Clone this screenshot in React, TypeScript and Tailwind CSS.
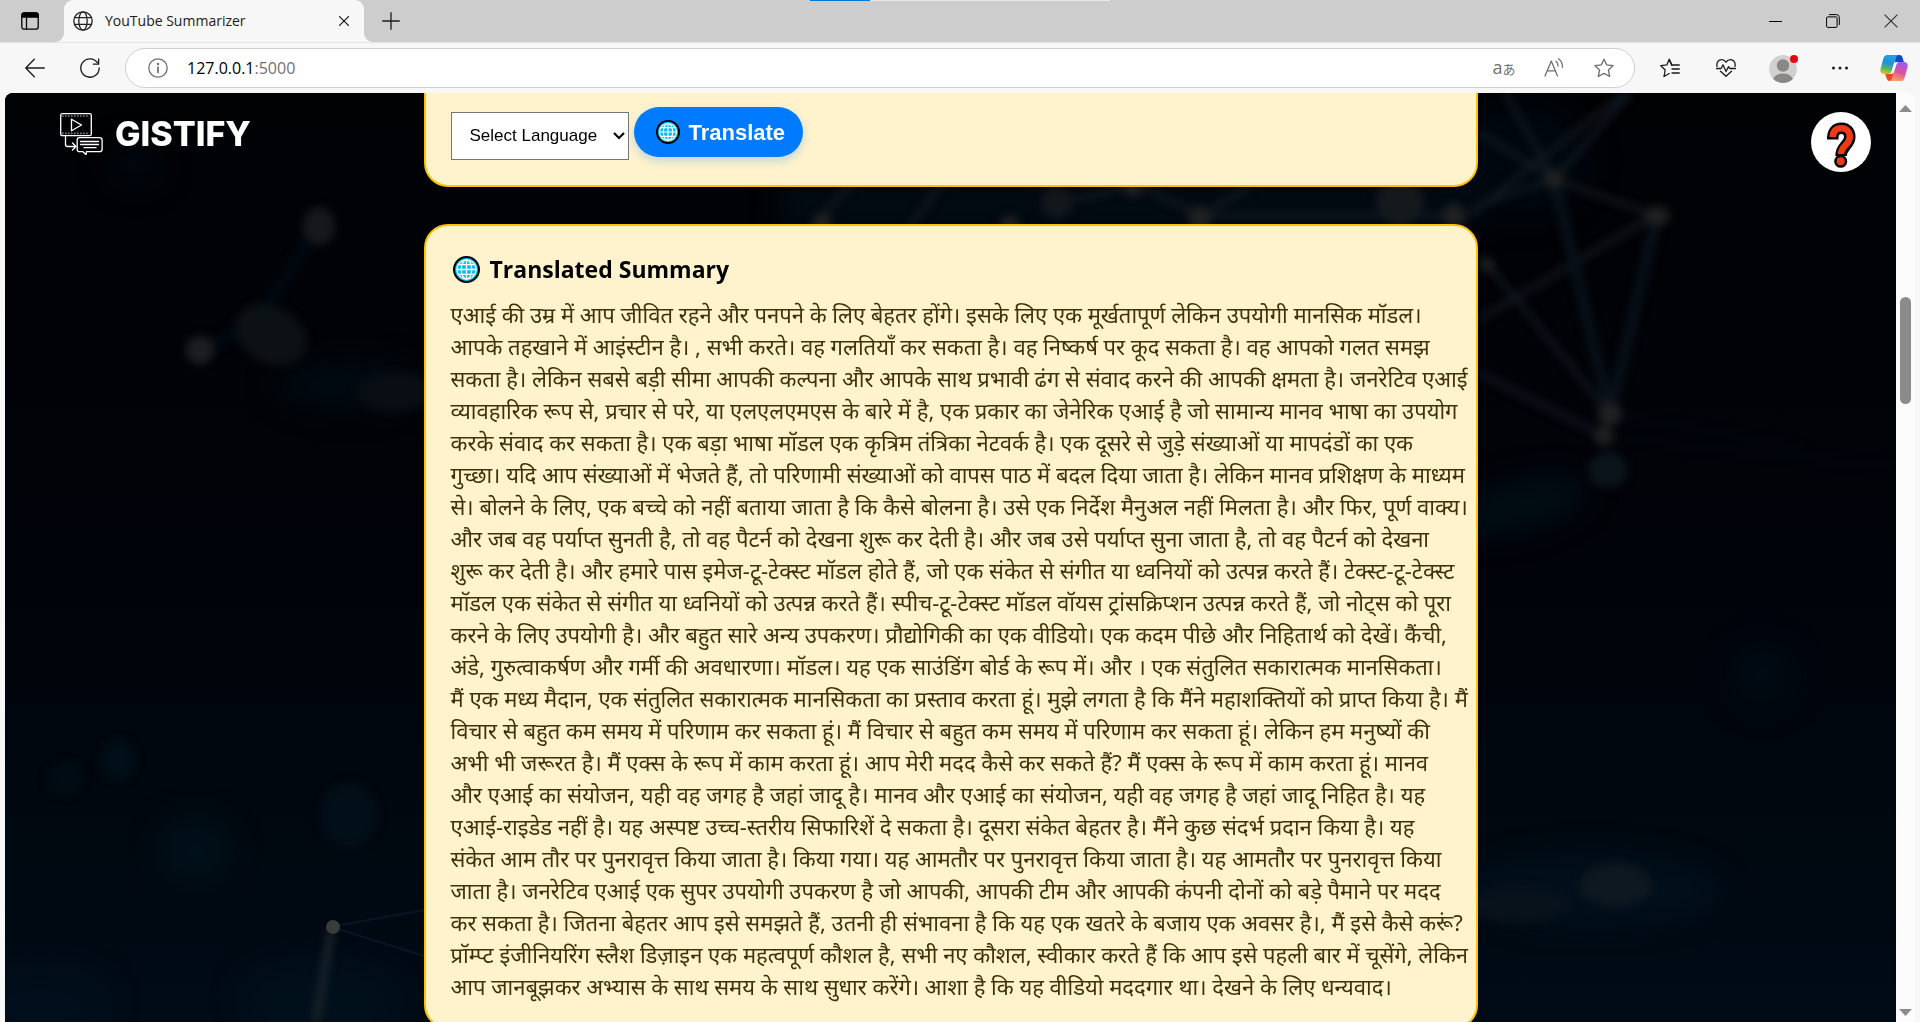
import React from "react";

const SUMMARY_LINES = [
  "एआई की उम्र में आप जीवित रहने और पनपने के लिए बेहतर होंगे। इसके लिए एक मूर्खतापूर्ण लेकिन उपयोगी मानसिक मॉडल।",
  "आपके तहखाने में आइंस्टीन है। , सभी करते। वह गलतियाँ कर सकता है। वह निष्कर्ष पर कूद सकता है। वह आपको गलत समझ",
  "सकता है। लेकिन सबसे बड़ी सीमा आपकी कल्पना और आपके साथ प्रभावी ढंग से संवाद करने की आपकी क्षमता है। जनरेटिव एआई",
  "व्यावहारिक रूप से, प्रचार से परे, या एलएलएमएस के बारे में है, एक प्रकार का जेनेरिक एआई है जो सामान्य मानव भाषा का उपयोग",
  "करके संवाद कर सकता है। एक बड़ा भाषा मॉडल एक कृत्रिम तंत्रिका नेटवर्क है। एक दूसरे से जुड़े संख्याओं या मापदंडों का एक",
  "गुच्छा। यदि आप संख्याओं में भेजते हैं, तो परिणामी संख्याओं को वापस पाठ में बदल दिया जाता है। लेकिन मानव प्रशिक्षण के माध्यम",
  "से। बोलने के लिए, एक बच्चे को नहीं बताया जाता है कि कैसे बोलना है। उसे एक निर्देश मैनुअल नहीं मिलता है। और फिर, पूर्ण वाक्य।",
  "और जब वह पर्याप्त सुनती है, तो वह पैटर्न को देखना शुरू कर देती है। और जब उसे पर्याप्त सुना जाता है, तो वह पैटर्न को देखना",
  "शुरू कर देती है। और हमारे पास इमेज-टू-टेक्स्ट मॉडल होते हैं, जो एक संकेत से संगीत या ध्वनियों को उत्पन्न करते हैं। टेक्स्ट-टू-टेक्स्ट",
  "मॉडल एक संकेत से संगीत या ध्वनियों को उत्पन्न करते हैं। स्पीच-टू-टेक्स्ट मॉडल वॉयस ट्रांसक्रिप्शन उत्पन्न करते हैं, जो नोट्स को पूरा",
  "करने के लिए उपयोगी है। और बहुत सारे अन्य उपकरण। प्रौद्योगिकी का एक वीडियो। एक कदम पीछे और निहितार्थ को देखें। कैंची,",
  "अंडे, गुरुत्वाकर्षण और गर्मी की अवधारणा। मॉडल। यह एक साउंडिंग बोर्ड के रूप में। और । एक संतुलित सकारात्मक मानसिकता।",
  "मैं एक मध्य मैदान, एक संतुलित सकारात्मक मानसिकता का प्रस्ताव करता हूं। मुझे लगता है कि मैंने महाशक्तियों को प्राप्त किया है। मैं",
  "विचार से बहुत कम समय में परिणाम कर सकता हूं। मैं विचार से बहुत कम समय में परिणाम कर सकता हूं। लेकिन हम मनुष्यों की",
  "अभी भी जरूरत है। मैं एक्स के रूप में काम करता हूं। आप मेरी मदद कैसे कर सकते हैं? मैं एक्स के रूप में काम करता हूं। मानव",
  "और एआई का संयोजन, यही वह जगह है जहां जादू है। मानव और एआई का संयोजन, यही वह जगह है जहां जादू निहित है। यह",
  "एआई-राइडेड नहीं है। यह अस्पष्ट उच्च-स्तरीय सिफारिशें दे सकता है। दूसरा संकेत बेहतर है। मैंने कुछ संदर्भ प्रदान किया है। यह",
  "संकेत आम तौर पर पुनरावृत्त किया जाता है। किया गया। यह आमतौर पर पुनरावृत्त किया जाता है। यह आमतौर पर पुनरावृत्त किया",
  "जाता है। जनरेटिव एआई एक सुपर उपयोगी उपकरण है जो आपकी, आपकी टीम और आपकी कंपनी दोनों को बड़े पैमाने पर मदद",
  "कर सकता है। जितना बेहतर आप इसे समझते हैं, उतनी ही संभावना है कि यह एक खतरे के बजाय एक अवसर है।, मैं इसे कैसे करूं?",
  "प्रॉम्प्ट इंजीनियरिंग स्लैश डिज़ाइन एक महत्वपूर्ण कौशल है, सभी नए कौशल, स्वीकार करते हैं कि आप इसे पहली बार में चूसेंगे, लेकिन",
  "आप जानबूझकर अभ्यास के साथ समय के साथ सुधार करेंगे। आशा है कि यह वीडियो मददगार था। देखने के लिए धन्यवाद।",
];

type IconProps = { className?: string; children: React.ReactNode; box?: string };

function Icon({ className = "size-5", children, box = "0 0 20 20" }: IconProps) {
  return (
    <svg
      viewBox={box}
      className={className}
      fill="none"
      stroke="currentColor"
      strokeWidth="1.3"
      strokeLinecap="round"
      strokeLinejoin="round"
      aria-hidden="true"
    >
      {children}
    </svg>
  );
}

function ToolButton({ label, className = "w-10", children }: { label: string; className?: string; children: React.ReactNode }) {
  return (
    <button type="button" aria-label={label} className={`flex h-10 shrink-0 items-center justify-center ${className}`}>
      {children}
    </button>
  );
}

function GlobeEmoji({ className }: { className: string }) {
  return (
    <svg viewBox="0 0 26 26" className={className} fill="none" aria-hidden="true">
      <circle cx="13" cy="13" r="12" fill="#00bcf2" stroke="#000" strokeWidth="2" />
      <g stroke="#fff" strokeWidth="1.3">
        <circle cx="13" cy="13" r="9.2" />
        <ellipse cx="13" cy="13" rx="5" ry="9.2" />
        <path d="M13 3.8v18.4M3.8 13h18.4M5.5 8.3h15M5.5 17.7h15" />
      </g>
    </svg>
  );
}

function TabStrip() {
  return (
    <header className="relative flex h-[42px] shrink-0 items-stretch bg-[#cdcdcd]">
      <div className="absolute top-0 left-1/2 h-px w-[300px] -translate-x-1/2 bg-[#e6e6e6]">
        <div className="h-px w-[60px] bg-[#0078d7]" />
      </div>
      <button type="button" aria-label="Tab actions" className="flex w-[64px] items-center justify-center pr-1">
        <svg viewBox="0 0 18 18" className="size-[18px]" fill="none" stroke="#000" strokeWidth="1.3" aria-hidden="true">
          <rect x="0.8" y="0.8" width="16.4" height="16.4" rx="2.5" />
          <path d="M1 3a2 2 0 0 1 2-2h12a2 2 0 0 1 2 2v2H1z" fill="#000" />
          <path d="M5.5 5v12" />
        </svg>
      </button>
      <div className="relative flex w-[300px] items-center rounded-t-[9px] bg-[#f7f7f7] pr-3 pl-[9px]">
        <svg viewBox="0 0 9 9" className="absolute bottom-0 -left-[9px] size-[9px]" fill="#f7f7f7" aria-hidden="true">
          <path d="M9 0v9H0a9 9 0 0 0 9-9z" />
        </svg>
        <svg viewBox="0 0 9 9" className="absolute -right-[9px] bottom-0 size-[9px]" fill="#f7f7f7" aria-hidden="true">
          <path d="M0 0v9h9a9 9 0 0 1-9-9z" />
        </svg>
        <Icon className="size-5 shrink-0 text-[#222]">
          <circle cx="10" cy="10" r="9.2" />
          <ellipse cx="10" cy="10" rx="4.2" ry="9.2" />
          <path d="M2 6.6h16M2 13.4h16" />
        </Icon>
        <span className="ml-3 flex-1 truncate text-[14px] leading-5 text-[#1b1b1b]">YouTube Summarizer</span>
        <button type="button" aria-label="Close tab" className="flex size-4 items-center justify-center text-[#1b1b1b]">
          <Icon className="size-[10px]" box="0 0 10 10">
            <path d="M.6.6l8.8 8.8M9.4.6L.6 9.4" />
          </Icon>
        </button>
      </div>
      <button type="button" aria-label="New tab" className="flex w-[54px] items-center justify-center text-[#1b1b1b]">
        <Icon className="size-[18px]" box="0 0 18 18">
          <path d="M9 .7v16.6M.7 9h16.6" />
        </Icon>
      </button>
      <div className="ml-auto flex text-black">
        <button type="button" aria-label="Minimize" className="flex w-[58px] items-center justify-center">
          <span className="h-px w-[13px] bg-black" />
        </button>
        <button type="button" aria-label="Restore" className="flex w-[58px] items-center justify-center">
          <svg viewBox="0 0 14 14" className="size-[14px]" fill="none" stroke="currentColor" aria-hidden="true">
            <rect x="0.6" y="2.9" width="10.5" height="10.5" rx="1" />
            <path d="M3 .6h7.5a2.8 2.8 0 0 1 2.8 2.8V11" />
          </svg>
        </button>
        <button type="button" aria-label="Close window" className="flex w-[58px] items-center justify-center text-[#333]">
          <svg viewBox="0 0 14 14" className="size-[14px]" fill="none" stroke="currentColor" strokeWidth="1.2" aria-hidden="true">
            <path d="M.6.6l12.8 12.8M13.4.6L.6 13.4" />
          </svg>
        </button>
      </div>
    </header>
  );
}

function Toolbar() {
  return (
    <nav aria-label="Browser toolbar" className="flex h-[50px] shrink-0 items-center border-t border-[#e4e4e4] bg-[#f7f7f7] pl-[15px] text-[#1b1b1b]">
      <ToolButton label="Back">
        <Icon>
          <path d="M19.3 10H1M9.3 1.2L.8 10l8.5 8.8" />
        </Icon>
      </ToolButton>
      <ToolButton label="Refresh" className="ml-[15px] w-10">
        <Icon>
          <path d="M17.6 4.8A9.2 9.2 0 1 0 19.2 10" />
          <path d="M18.6 1v5.2h-5.2" />
        </Icon>
      </ToolButton>
      <div className="ml-[15px] flex h-10 flex-1 items-center rounded-full border border-[#cfcfcf] bg-white pr-[5px] pl-[22px] text-[#6f6f6f]">
        <Icon className="size-5 shrink-0">
          <circle cx="10" cy="10" r="9.2" />
          <path d="M10 9v5.4" strokeWidth="1.7" />
          <circle cx="10" cy="6" r="0.6" fill="currentColor" />
        </Icon>
        <div aria-label="Address" className="ml-[19px] flex-1 text-[16px] leading-6">
          <span className="text-black">127.0.0.1</span>
          <span>:5000</span>
        </div>
        <ToolButton label="Translate page" className="w-[50px]">
          <span className="flex items-baseline font-['Open_Sans','Noto_Sans_CJK_JP',sans-serif] leading-5">
            <span className="text-[18px]">a</span>
            <span className="text-[13px]">あ</span>
          </span>
        </ToolButton>
        <ToolButton label="Read aloud" className="w-[50px]">
          <Icon>
            <path d="M1 18L7.3 3l6.2 15M3.3 12.8h8" />
            <path d="M12 3.2c1.3 1 2 2.7 2 4.8M14.5.8c2.300 1.600 4 5 4 8.500" />
          </Icon>
        </ToolButton>
        <ToolButton label="Add to favorites" className="w-[50px]">
          <Icon>
            <path d="M10 1.200l2.700 5.700 6.400.800-4.700 4.300 1.300 6.500L10 15.400l-5.700 3.100 1.300-6.500L.9 7.700l6.400-.8z" />
          </Icon>
        </ToolButton>
      </div>
      <ToolButton label="Favorites" className="ml-2 w-[54px]">
        <Icon>
          <path d="M12 7.300h-.3L9.200 1.400 6.800 6.900l-6 .8 4.400 4.300-1.200 6.500 5.200-3" />
          <path d="M12 7h7.300M12 11h7.300M12 15h7.300M9.200 1.400L12 7" />
        </Icon>
      </ToolButton>
      <ToolButton label="Browser essentials" className="w-[57px]">
        <Icon>
          <path d="M1 8.400C.2 4.600 2.400 1.600 5.500 1.600c2 0 3.500 1 4.500 2.600 1-1.600 2.500-2.600 4.500-2.600 3.100 0 5.300 3 4.500 6.800" />
          <path d="M.5 10.500h4.600L7 6.800l3 6.700 2.600-4.900 1.200 1.900h5.700M4.500 13.300l5.500 5 5.500-5" />
        </Icon>
      </ToolButton>
      <ToolButton label="Profile" className="w-[58px]">
        <svg viewBox="0 0 30 30" className="size-[30px]" aria-hidden="true">
          <defs>
            <clipPath id="avatar">
              <circle cx="15" cy="16" r="14" />
            </clipPath>
          </defs>
          <g clipPath="url(#avatar)">
            <circle cx="15" cy="16" r="14" fill="#d2d0ce" />
            <circle cx="15" cy="12.500" r="6.200" fill="#8a8886" />
            <ellipse cx="15" cy="28.500" rx="10.500" ry="8" fill="#8a8886" />
          </g>
          <circle cx="26" cy="6" r="4" fill="#e30613" />
        </svg>
      </ToolButton>
      <ToolButton label="Settings and more" className="w-[55px]">
        <Icon>
          <g fill="currentColor" stroke="none">
            <circle cx="3.500" cy="10" r="1.500" />
            <circle cx="10" cy="10" r="1.500" />
            <circle cx="16.500" cy="10" r="1.500" />
          </g>
        </Icon>
      </ToolButton>
      <ToolButton label="Copilot" className="w-[53px]">
        <svg viewBox="0 0 28 28" className="size-7" aria-hidden="true">
          <defs>
            <linearGradient id="cpA" x1="0.400" y1="0" x2="0.200" y2="1">
              <stop offset="0" stopColor="#1da1e8" />
              <stop offset="0.400" stopColor="#2191d9" />
              <stop offset="0.700" stopColor="#56b56a" />
              <stop offset="1" stopColor="#f2c500" />
            </linearGradient>
            <linearGradient id="cpB" x1="0.600" y1="0" x2="0.300" y2="1">
              <stop offset="0" stopColor="#9b5cf5" />
              <stop offset="0.500" stopColor="#e0509c" />
              <stop offset="1" stopColor="#ffa45c" />
            </linearGradient>
          </defs>
          <path d="M15 1h4.500c2 0 2.600 1.200 3.200 3l1.100 4h-5.500c-2 0-2.600 1-3.100 2.600z" fill="#1747c9" />
          <path d="M13.500 27H9.800C7.500 27 7 25.600 6.400 23.800L5.200 20H10c2 0 2.600-1.200 3.200-3z" fill="#e8482c" />
          <path d="M7.500 1h10.800c-1.600.6-2.200 2.300-2.800 4.200L11.800 17c-.7 2-1.600 3-3.600 3H4C1.200 20-.2 17.800.5 15L3.200 5C4 2.400 5 1 7.500 1z" fill="url(#cpA)" />
          <path d="M20.500 27H9.700c1.600-.6 2.200-2.300 2.800-4.200L16.200 11c.7-2 1.600-3 3.600-3H24c2.800 0 4.200 2.200 3.500 5l-2.700 10c-.8 2.600-1.800 4-4.300 4z" fill="url(#cpB)" />
          <path d="M14.500 8.500h4c-1.700.5-2.400 1.800-2.900 3.400L14 17c-.6 1.800-1.400 2.600-3 3H9.200c1.400-.5 2-1.500 2.500-3l1.500-5c.4-1.500.6-2.700 1.300-3.500z" fill="#fff" />
        </svg>
      </ToolButton>
    </nav>
  );
}

function NetworkBackdrop() {
  return (
    <svg
      viewBox="5 93 1891 929"
      preserveAspectRatio="xMidYMid slice"
      className="absolute inset-0 size-full"
      fill="none"
      aria-hidden="true"
    >
      <defs>
        <linearGradient id="night" x1="0" y1="0" x2="0" y2="1">
          <stop offset="0" stopColor="#000204" />
          <stop offset="0.500" stopColor="#000309" />
          <stop offset="1" stopColor="#000b15" />
        </linearGradient>
        <filter id="soft" x="-20%" y="-20%" width="140%" height="140%" colorInterpolationFilters="sRGB">
          <feGaussianBlur stdDeviation="4" />
        </filter>
        <filter id="haze" x="-50%" y="-50%" width="200%" height="200%" colorInterpolationFilters="sRGB">
          <feGaussianBlur stdDeviation="14" />
        </filter>
      </defs>
      <rect x="5" y="93" width="1891" height="929" fill="url(#night)" />
      <g filter="url(#haze)">
        <ellipse cx="135" cy="165" rx="28" ry="22" fill="#00070e" />
        <ellipse cx="350" cy="385" rx="75" ry="25" fill="#000a10" />
        <ellipse cx="195" cy="850" rx="36" ry="34" fill="#001018" />
        <ellipse cx="40" cy="1005" rx="70" ry="40" fill="#000f1b" />
        <ellipse cx="320" cy="1000" rx="80" ry="40" fill="#00101b" />
        <ellipse cx="1520" cy="505" rx="70" ry="25" fill="#000d14" transform="rotate(-15 1520 505)" />
        <ellipse cx="1763" cy="675" rx="32" ry="32" fill="#000a13" />
        <ellipse cx="1590" cy="890" rx="130" ry="35" fill="#00101b" />
        <ellipse cx="1520" cy="160" rx="70" ry="60" fill="#00070e" />
        <rect x="780" y="180" width="700" height="50" fill="#020b13" />
      </g>
      <g filter="url(#soft)">
        <path d="M200 350L255 325L319 226" stroke="#00090f" strokeWidth="14" />
        <ellipse cx="319" cy="226" rx="16" ry="19" fill="#16191c" />
        <ellipse cx="271" cy="335" rx="38" ry="28" fill="#0c1116" transform="rotate(28 271 335)" />
        <ellipse cx="200" cy="350" rx="14" ry="14" fill="#1c1e21" />
        <ellipse cx="395" cy="392" rx="38" ry="20" fill="#080e14" />
        <ellipse cx="118" cy="760" rx="18" ry="20" fill="#000f18" />
        <ellipse cx="65" cy="779" rx="18" ry="16" fill="#000c15" />
        <ellipse cx="349" cy="815" rx="28" ry="32" fill="#020f18" />
        <path d="M331 930L316 1022" stroke="#1c262d" strokeWidth="7" />
        <g stroke="#121a22" strokeWidth="5">
          <path d="M1554 179L1657 216M1554 179L1478 205M1554 179L1505 93M1554 179L1630 93M1625 93L1470 215M1478 132L1554 179M1610 414L1480 255M1478 320L1650 218M1478 372L1604 436" />
          <path d="M800 240L855 180M900 240L945 180M1200 216L1250 187M1200 216L1130 180M1200 216L1450 216M1057 203L1130 187" />
        </g>
        <g stroke="#081118" strokeWidth="11">
          <path d="M1554 179L1610 414M1657 216L1610 414" />
        </g>
        <path d="M1610 414L1800 448M1604 436L1896 468" stroke="#020c14" strokeWidth="3" />
        <ellipse cx="1608" cy="470" rx="20" ry="18" fill="#0b141a" />
        <g fill="#1f2021">
          <circle cx="1554" cy="179" r="10" />
          <ellipse cx="1657" cy="216" rx="13" ry="10" />
          <circle cx="1610" cy="414" r="12" />
          <circle cx="1604" cy="436" r="10" />
          <circle cx="1487" cy="265" r="7" />
          <circle cx="822" cy="223" r="10" />
          <circle cx="1010" cy="225" r="10" />
          <circle cx="1133" cy="187" r="10" />
          <circle cx="1200" cy="218" r="12" />
          <circle cx="1454" cy="216" r="12" />
        </g>
        <circle cx="1400" cy="203" r="24" fill="#14191c" />
        <circle cx="1057" cy="203" r="16" fill="#12171b" />
        <ellipse cx="1616" cy="885" rx="36" ry="22" fill="#0e1820" />
        <ellipse cx="1520" cy="905" rx="50" ry="18" fill="#08121b" />
      </g>
      <path d="M335 926L430 909M335 928L430 958" stroke="#031824" strokeWidth="2" />
      <ellipse cx="333" cy="927" rx="7" ry="7" fill="#3a3b3c" />
    </svg>
  );
}

function Brand() {
  return (
    <a href="#top" className="absolute top-5 left-[55px] flex items-center gap-3 text-white">
      <svg viewBox="0 0 43 42" className="h-[42px] w-[43px]" fill="none" stroke="currentColor" strokeWidth="1.300" strokeLinejoin="round" strokeLinecap="round" aria-hidden="true">
        <rect x="0.700" y="0.700" width="30.600" height="22" rx="1.500" />
        <path d="M2.500 3h27M2.500 20.400h27" strokeWidth="1.600" strokeDasharray="0.800 2.200" strokeLinecap="butt" />
        <path d="M11.500 6.200v11.600L21.500 12z" />
        <path d="M5.500 23.500v8c0 1.500.700 2 2 2h8M12.500 30l3.500 3.500-3.500 3.500" />
        <path d="M19.500 24.700h20c1.600 0 2.600 1 2.600 2.500v9c0 1.500-1 2.500-2.600 2.500H26.500l-.5 3-3-3h-3.500c-1.500 0-2.300-1-2.300-2.500v-9c0-1.500.800-2.500 2.300-2.500z" />
        <path d="M20.500 28.500h18M20.500 31.500h18M24 34.700h12" />
      </svg>
      <span className="font-['Inter',sans-serif] text-[34px] leading-10 font-extrabold">GISTIFY</span>
    </a>
  );
}

function HelpButton() {
  return (
    <button type="button" aria-label="Help" className="absolute top-[19px] right-[25px] size-[60px] rounded-full bg-white">
      <svg viewBox="0 0 60 60" className="size-full" fill="none" aria-hidden="true">
        <path d="M21.700 27.500C21.700 19.500 25 16.300 30.500 16.300c5.200 0 8.300 3.500 8.300 8.700 0 8-8.800 9-8.800 19" stroke="#000" strokeWidth="11.500" />
        <circle cx="29.700" cy="49.300" r="6.500" fill="#000" />
        <path d="M21.700 25.200C22 19 25 16.300 30.500 16.300c5.200 0 8.300 3.500 8.300 8.700 0 8-8.800 8.500-8.800 17" stroke="#f03a17" strokeWidth="6.500" />
        <circle cx="29.700" cy="49.300" r="4" fill="#f03a17" />
      </svg>
    </button>
  );
}

function Scrollbar() {
  return (
    <div className="flex w-[19px] shrink-0 flex-col items-center rounded-tr-lg bg-[#fcfcfc] pt-3 pb-[6px]" aria-hidden="true">
      <svg viewBox="0 0 13 7" className="h-[7px] w-[13px]" fill="#8b8b8b">
        <path d="M6.500 0L13 7H0z" />
      </svg>
      <div className="flex w-full flex-1 flex-col items-center">
        <div className="h-[20.6%]" />
        <div className="h-[12%] w-[11px] rounded-full bg-[#8b8b8b]" />
      </div>
      <svg viewBox="0 0 13 7" className="h-[7px] w-[13px]" fill="#8b8b8b">
        <path d="M6.500 7L13 0H0z" />
      </svg>
    </div>
  );
}

export default function App() {
  return (
    <div className="flex h-screen flex-col overflow-hidden bg-[#f7f7f7] font-['Open_Sans',sans-serif]">
      <TabStrip />
      <Toolbar />
      <div className="mx-[5px] mt-px flex min-h-0 flex-1">
        <main id="top" className="relative min-w-0 flex-1 overflow-hidden rounded-tl-lg bg-black">
          <NetworkBackdrop />
          <div className="relative mx-auto flex w-full max-w-[1054px] flex-col gap-[37px]">
            <section className="rounded-b-[24px] border-2 border-t-0 border-[#ffc107] bg-[#fff3cd] px-[25px] pt-[14px] pb-[25px]">
              <form className="flex items-start gap-[5px] font-['Liberation_Sans',Arial,sans-serif]" onSubmit={(e) => e.preventDefault()}>
                <div className="relative mt-[5px]">
                  <select
                    aria-label="Language"
                    defaultValue=""
                    className="block h-12 w-[178px] appearance-none border border-[#767676] bg-white pl-[18px] text-[17px] text-black"
                  >
                    <option value="">Select Language</option>
                    <option value="hi">Hindi</option>
                  </select>
                  <svg viewBox="0 0 12 8" className="pointer-events-none absolute top-5 right-1 h-2 w-3" fill="none" stroke="#000" strokeWidth="2.200" aria-hidden="true">
                    <path d="M1 1l5 5 5-5" />
                  </svg>
                </div>
                <button
                  type="submit"
                  className="flex h-[50px] items-center gap-[9px] rounded-full bg-[#007bff] pr-[18px] pl-[22px] text-[22px] font-bold text-white shadow-[0_4px_10px_rgba(0,123,255,0.25)]"
                >
                  <GlobeEmoji className="size-6" />
                  Translate
                </button>
              </form>
            </section>
            <section className="rounded-[24px] border-2 border-[#ffc107] bg-[#fff3cd] p-[25px]">
              <h2 className="mb-[11px] flex h-9 items-center gap-2.5 pl-[2px] text-[23px] font-bold text-black">
                <GlobeEmoji className="size-[27px]" />
                Translated Summary
              </h2>
              <p lang="hi" className="font-['Noto_Sans','Noto_Sans_Devanagari',sans-serif] text-[22px] leading-8 font-normal text-[#3f3208]">
                {SUMMARY_LINES.map((line, i) => (
                  <span key={i} className="block whitespace-nowrap">
                    {line}{" "}
                  </span>
                ))}
              </p>
            </section>
          </div>
          <Brand />
          <HelpButton />
        </main>
        <Scrollbar />
      </div>
    </div>
  );
}
